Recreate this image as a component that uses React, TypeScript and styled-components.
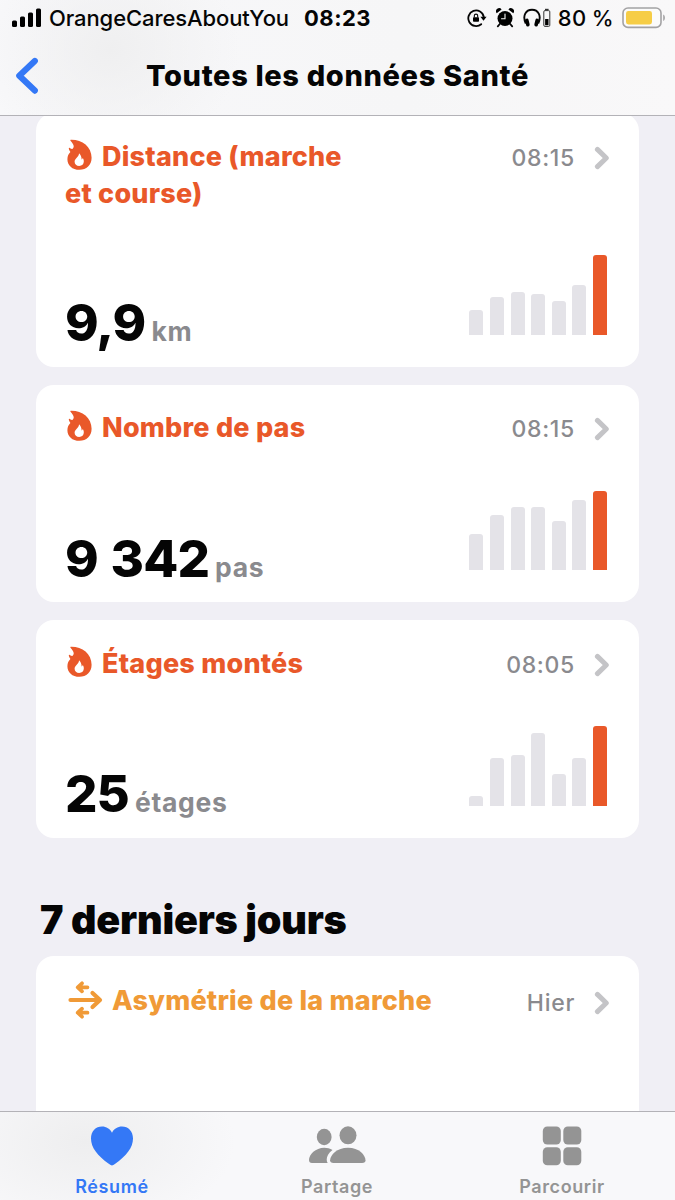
import React from "react";
import styled, { createGlobalStyle } from "styled-components";

const GlobalStyle = createGlobalStyle`
  *, *::before, *::after { box-sizing: border-box; }
  body {
    margin: 0;
    background: #f0eff5;
    font-family: Inter, "Liberation Sans", sans-serif;
    color: #050505;
  }
`;

const ORANGE = "#e95829";
const AMBER = "#f09a37";
const BLUE = "#3478f6";

const Screen = styled.div`
  width: 675px;
  height: 1200px;
  display: flex;
  flex-direction: column;
  overflow: hidden;
`;

const TopBar = styled.header`
  flex: 0 0 116px;
  border-bottom: 1px solid #b3b2b7;
  background: radial-gradient(ellipse 130px 110px at 110px 50px, #efeff0, rgba(239, 239, 240, 0) 100%),
    linear-gradient(90deg, #f8f8fa, #f6f6f7 60%, #f9f8f9);
`;

const StatusBar = styled.div`
  height: 36px;
  padding: 0 9px 0 11px;
  display: flex;
  align-items: center;
  white-space: nowrap;
`;

const Carrier = styled.span`
  margin-left: 7px;
  width: 255px;
  font-size: 22px;
  font-weight: 500;
  letter-spacing: -0.1px;
`;

const Clock = styled.span`
  font-size: 22px;
  font-weight: 700;
  letter-spacing: 0.5px;
`;

const StatusIcons = styled.div`
  margin-left: auto;
  display: flex;
  align-items: center;
`;

const IconCluster = styled.div`
  display: flex;
  align-items: center;
  gap: 9px;
`;

const BatteryLevel = styled.span`
  margin: 0 8px 0 7px;
  font-size: 22px;
  font-weight: 500;
  letter-spacing: 0.5px;
  word-spacing: -1.5px;
`;

const NavBar = styled.div`
  height: 79px;
  display: grid;
  grid-template-columns: 60px 1fr 60px;
  align-items: center;
  padding: 0 15px;
`;

const NavTitle = styled.h1`
  margin: 0;
  font-size: 29px;
  font-weight: 800;
  letter-spacing: 0.65px;
  text-align: center;
  white-space: nowrap;
`;

const Content = styled.main`
  flex: 1;
  min-height: 0;
  overflow: hidden;
  padding: 0 36px;
`;

const CardList = styled.div`
  display: flex;
  flex-direction: column;
  gap: 18px;
  margin-top: -3px;
`;

const Card = styled.section<{ $height: number }>`
  height: ${(p) => p.$height}px;
  border-radius: 18px;
  background: #fff;
  padding: 24.5px 29px 0;
  display: flex;
  flex-direction: column;
  justify-content: space-between;
`;

const CardHeader = styled.div`
  display: flex;
  justify-content: space-between;
  align-items: flex-start;
`;

const CardTitle = styled.h2<{ $color: string; $iconDrop?: number }>`
  margin: 0;
  color: ${(p) => p.$color};
  font-size: 27px;
  line-height: 37px;
  font-weight: 800;
  letter-spacing: 0.22px;
  white-space: pre-line;

  svg {
    vertical-align: ${(p) => -(p.$iconDrop ?? 5)}px;
    margin-right: 9px;
  }
`;

const CardMeta = styled.div<{ $height?: number }>`
  display: flex;
  align-items: center;
  gap: 19px;
  height: ${(p) => p.$height ?? 40}px;
  font-size: 23px;
  font-weight: 500;
  letter-spacing: 0.7px;
  color: #8a8a8e;
`;

const CardFooter = styled.div`
  display: flex;
  justify-content: space-between;
  align-items: flex-end;
`;

const Value = styled.div`
  padding-bottom: 5.5px;
  font-size: 51px;
  line-height: 60px;
  font-weight: 800;
  letter-spacing: -0.9px;
  word-spacing: 2.5px;
  white-space: nowrap;
`;

const Unit = styled.span`
  margin-left: 6px;
  font-size: 26.5px;
  font-weight: 700;
  letter-spacing: 0.7px;
  color: #8a8a8e;
`;

const Chart = styled.div`
  display: flex;
  align-items: flex-end;
  gap: 6.6px;
  height: 111.5px;
  padding: 0 3px 32px 0;
`;

const Bar = styled.div<{ $active: boolean }>`
  width: 14px;
  border-radius: 3px 3px 0 0;
  background: ${(p) => (p.$active ? ORANGE : "#e4e3e8")};
`;

const SectionTitle = styled.h2`
  margin: 58px 0 11px 4px;
  font-size: 39.5px;
  line-height: 49px;
  font-weight: 900;
  letter-spacing: -0.2px;
`;

const TabBar = styled.nav`
  flex: 0 0 89px;
  border-top: 1px solid #b3b2b7;
  display: grid;
  grid-template-columns: repeat(3, 1fr);
  background: radial-gradient(ellipse 150px 90px at 85px 30px, #eeeeef, rgba(238, 238, 239, 0) 100%), #f8f8fa;
`;

const Tab = styled.div<{ $active?: boolean }>`
  display: flex;
  flex-direction: column;
  align-items: center;
  padding: 12px 2px 0 0;
  color: ${(p) => (p.$active ? BLUE : "#949494")};
`;

const TabLabel = styled.span`
  margin: 10px 0 0 1px;
  font-size: 18px;
  line-height: 22px;
  font-weight: 600;
  letter-spacing: 0.6px;
`;

const Signal = () => (
  <svg width="31" height="20" viewBox="0 0 31 20">
    <rect x="1" y="12.5" width="5" height="6.5" rx="1.5" />
    <rect x="9" y="8.5" width="5" height="10.5" rx="1.5" />
    <rect x="17" y="4.5" width="5" height="14.5" rx="1.5" />
    <rect x="25" y="0.5" width="5" height="18.5" rx="1.5" />
  </svg>
);

const RotationLock = () => (
  <svg width="20" height="20" viewBox="0 0 20 20">
    <path d="M14.2 16.2A7.8 7.8 0 1 1 16.8 9" fill="none" stroke="#050505" strokeWidth="1.8" strokeLinecap="round" />
    <path d="M13.4 8.8h6.200l-3.100 4z" />
    <rect x="6" y="9.2" width="6" height="4.6" rx="0.8" />
    <path d="M7.300 9.500V7.800a1.700 1.700 0 0 1 3.400 0v1.700" fill="none" stroke="#050505" strokeWidth="1.1" />
  </svg>
);

const Alarm = () => (
  <svg width="18" height="20" viewBox="0 0 18 20">
    <circle cx="9" cy="10.5" r="7.5" />
    <path d="M0.7 5.2A3 3 0 0 1 5.6 1.4zM17.3 5.2a3 3 0 0 0-4.9-3.8z" />
    <path d="M3.8 16l-2 2.3M14.2 16l2 2.3" stroke="#050505" strokeWidth="1.8" strokeLinecap="round" />
    <path d="M9 6v4.800H5.500" fill="none" stroke="#f7f7f8" strokeWidth="1.1" strokeLinecap="round" />
  </svg>
);

const Headphones = () => (
  <svg width="28" height="20" viewBox="0 0 28 20">
    <path d="M2.8 15.5C-1 7.5 3 1.8 9 1.8s10 5.7 6.2 13.7" fill="none" stroke="#050505" strokeWidth="1.9" />
    <rect x="2.4" y="10.5" width="3.6" height="8" rx="1.7" transform="rotate(-14 4.4 14)" />
    <rect x="12" y="10.5" width="3.6" height="8" rx="1.7" transform="rotate(14 13.6 14)" />
    <rect x="20.8" y="2.6" width="6" height="15.8" rx="1.2" fill="none" stroke="#333" strokeWidth="1" />
    <rect x="22" y="0.8" width="3.6" height="1.2" fill="#333" />
    <rect x="22.1" y="11" width="3.4" height="6.2" />
  </svg>
);

const Battery = () => (
  <svg width="44" height="22" viewBox="0 0 44 22">
    <rect x="1" y="1" width="38" height="19.4" rx="5" fill="#fbfbfb" stroke="#a3a2a4" strokeWidth="1.6" />
    <rect x="4" y="4" width="26" height="13.5" rx="2.4" fill="#f6cd46" />
    <path d="M41.2 7.5c2.3.8 2.3 5.6 0 6.4z" fill="#a3a2a4" />
  </svg>
);

const BackChevron = () => (
  <svg width="24" height="38" viewBox="0 0 24 38">
    <path d="M19.8 4L4.3 18.8l15.500 14.800" fill="none" stroke={BLUE} strokeWidth="6.2" strokeLinecap="round" strokeLinejoin="round" />
  </svg>
);

const Chevron = () => (
  <svg width="16" height="24" viewBox="0 0 16 24">
    <path d="M3.400 3.400l8.900 8.600-8.900 8.600" fill="none" stroke="#c4c4c7" strokeWidth="5" strokeLinecap="round" strokeLinejoin="round" />
  </svg>
);

const Flame = () => (
  <svg width="28" height="32" viewBox="0 0 28 32">
    <path
      fill={ORANGE}
      fillRule="evenodd"
      d="M5.500 1.700C5.100 1.100 5.400.7 6.100.7 17 .5 26.600 7.500 26.600 18.800 26.600 26.200 21.400 30.800 14.400 30.800 7.200 30.800 2.400 26.400 2.400 20.200 2.400 17 3.600 14.600 5.400 12.900 4.500 11.800 4 10.800 3.800 9.800c-.1-.9.4-1.200 1-.8.9.6 1.600.9 2.400 1.100 1.100-1 1.500-1.900 1.500-2.900C8.700 5.600 7.300 3.900 5.500 1.700zM14 14.200c.4 3-4.400 5.200-4.400 8.500 0 2.500 2 4.200 4.600 4.200 2.800 0 4.600-1.900 4.600-4.400 0-1.500-.4-2.600-1-3.400-.3.700-.7 1.200-1.200 1.400.1-2.400-.9-4.900-2.600-6.300z"
    />
  </svg>
);

const GaitArrows = () => (
  <svg width="38" height="40" viewBox="0 0 38 40">
    <g fill="none" stroke={AMBER} strokeLinecap="round" strokeLinejoin="round">
      <path d="M5.500 20H34M27.500 13L35 20l-7.500 7" strokeWidth="4.200" />
      <path d="M17 3.300L12.700 7.300l4.300 4M13.200 7.300h9.300M17 28.700L12.700 32.700l4.300 4M13.200 32.700h9.300" strokeWidth="3.700" />
    </g>
  </svg>
);

const Heart = () => (
  <svg width="44" height="42" viewBox="0 0 44 42">
    <path fill="currentColor" d="M22 41.500c-.8 0-1.800-.6-2.900-1.400C7.500 32 1 23.600 1 14.600 1 7.300 5.800 2.600 12 2.600c4.400 0 8 2.300 10 6.100 2-3.800 5.600-6.100 10-6.100 6.200 0 11 4.700 11 12 0 9-6.500 17.400-18.100 25.500-1.100.8-2.100 1.400-2.900 1.400z" />
  </svg>
);

const People = () => (
  <svg width="58" height="42" viewBox="0 0 58 42">
    <g fill="currentColor">
      <ellipse cx="16.2" cy="13" rx="7.400" ry="8.200" />
      <ellipse cx="40" cy="11.3" rx="8.5" ry="9" />
      <path d="M4 39C2 39 1 38 1 36c0-5.500 6.500-12.300 15.300-12.300 3 0 5.700.7 8.200 2.300-4 2.700-5.800 6.500-5.800 9.500 0 1.400.3 2.500 1 3.500z" />
      <path d="M25.500 39c-2.300 0-3.400-.9-3.400-2.700C22.100 31 29 23.700 40 23.700S57.500 31 57.500 36.300c0 1.800-1.100 2.700-3.400 2.700z" />
    </g>
  </svg>
);

const Grid = () => (
  <svg width="40" height="42" viewBox="0 0 40 42">
    <g fill="currentColor">
      <rect x="0.8" y="2.5" width="18" height="18" rx="4.5" />
      <rect x="21.3" y="2.5" width="18" height="18" rx="4.5" />
      <rect x="0.8" y="23.3" width="18" height="18" rx="4.5" />
      <rect x="21.3" y="23.3" width="18" height="18" rx="4.5" />
    </g>
  </svg>
);

interface Metric {
  title: string;
  time: string;
  value: string;
  unit: string;
  height: number;
  bars: number[];
}

const metrics: Metric[] = [
  { title: "Distance (marche\net course)", time: "08:15", value: "9,9", unit: "km", height: 253.5, bars: [24.5, 38, 42.5, 41, 33.5, 50, 79.5] },
  { title: "Nombre de pas", time: "08:15", value: "9 342", unit: "pas", height: 217.5, bars: [36, 55, 63, 63, 49.5, 70, 79.5] },
  { title: "Étages montés", time: "08:05", value: "25", unit: "étages", height: 217.5, bars: [10, 48, 50.5, 73, 31.5, 48, 79.5] },
];

const MetricCard = ({ title, time, value, unit, height, bars }: Metric) => (
  <Card $height={height}>
    <CardHeader>
      <CardTitle $color={ORANGE}>
        <Flame />
        {title}
      </CardTitle>
      <CardMeta>
        {time}
        <Chevron />
      </CardMeta>
    </CardHeader>
    <CardFooter>
      <Value>
        {value}
        <Unit>{unit}</Unit>
      </Value>
      <Chart>
        {bars.map((h, i) => (
          <Bar key={i} $active={i === bars.length - 1} style={{ height: h }} />
        ))}
      </Chart>
    </CardFooter>
  </Card>
);

export default function App() {
  return (
    <>
      <GlobalStyle />
      <Screen>
        <TopBar>
          <StatusBar>
            <Signal />
            <Carrier>OrangeCaresAboutYou</Carrier>
            <Clock>08:23</Clock>
            <StatusIcons>
              <IconCluster>
                <RotationLock />
                <Alarm />
                <Headphones />
              </IconCluster>
              <BatteryLevel>80 %</BatteryLevel>
              <Battery />
            </StatusIcons>
          </StatusBar>
          <NavBar>
            <BackChevron />
            <NavTitle>Toutes les données Santé</NavTitle>
          </NavBar>
        </TopBar>
        <Content>
          <CardList>
            {metrics.map((m) => (
              <MetricCard key={m.title} {...m} />
            ))}
          </CardList>
          <SectionTitle>7 derniers jours</SectionTitle>
          <Card $height={220}>
            <CardHeader>
              <CardTitle $color={AMBER} $iconDrop={10}>
                <GaitArrows />
                Asymétrie de la marche
              </CardTitle>
              <CardMeta $height={45}>
                Hier
                <Chevron />
              </CardMeta>
            </CardHeader>
          </Card>
        </Content>
        <TabBar>
          <Tab $active>
            <Heart />
            <TabLabel>Résumé</TabLabel>
          </Tab>
          <Tab>
            <People />
            <TabLabel>Partage</TabLabel>
          </Tab>
          <Tab>
            <Grid />
            <TabLabel>Parcourir</TabLabel>
          </Tab>
        </TabBar>
      </Screen>
    </>
  );
}
